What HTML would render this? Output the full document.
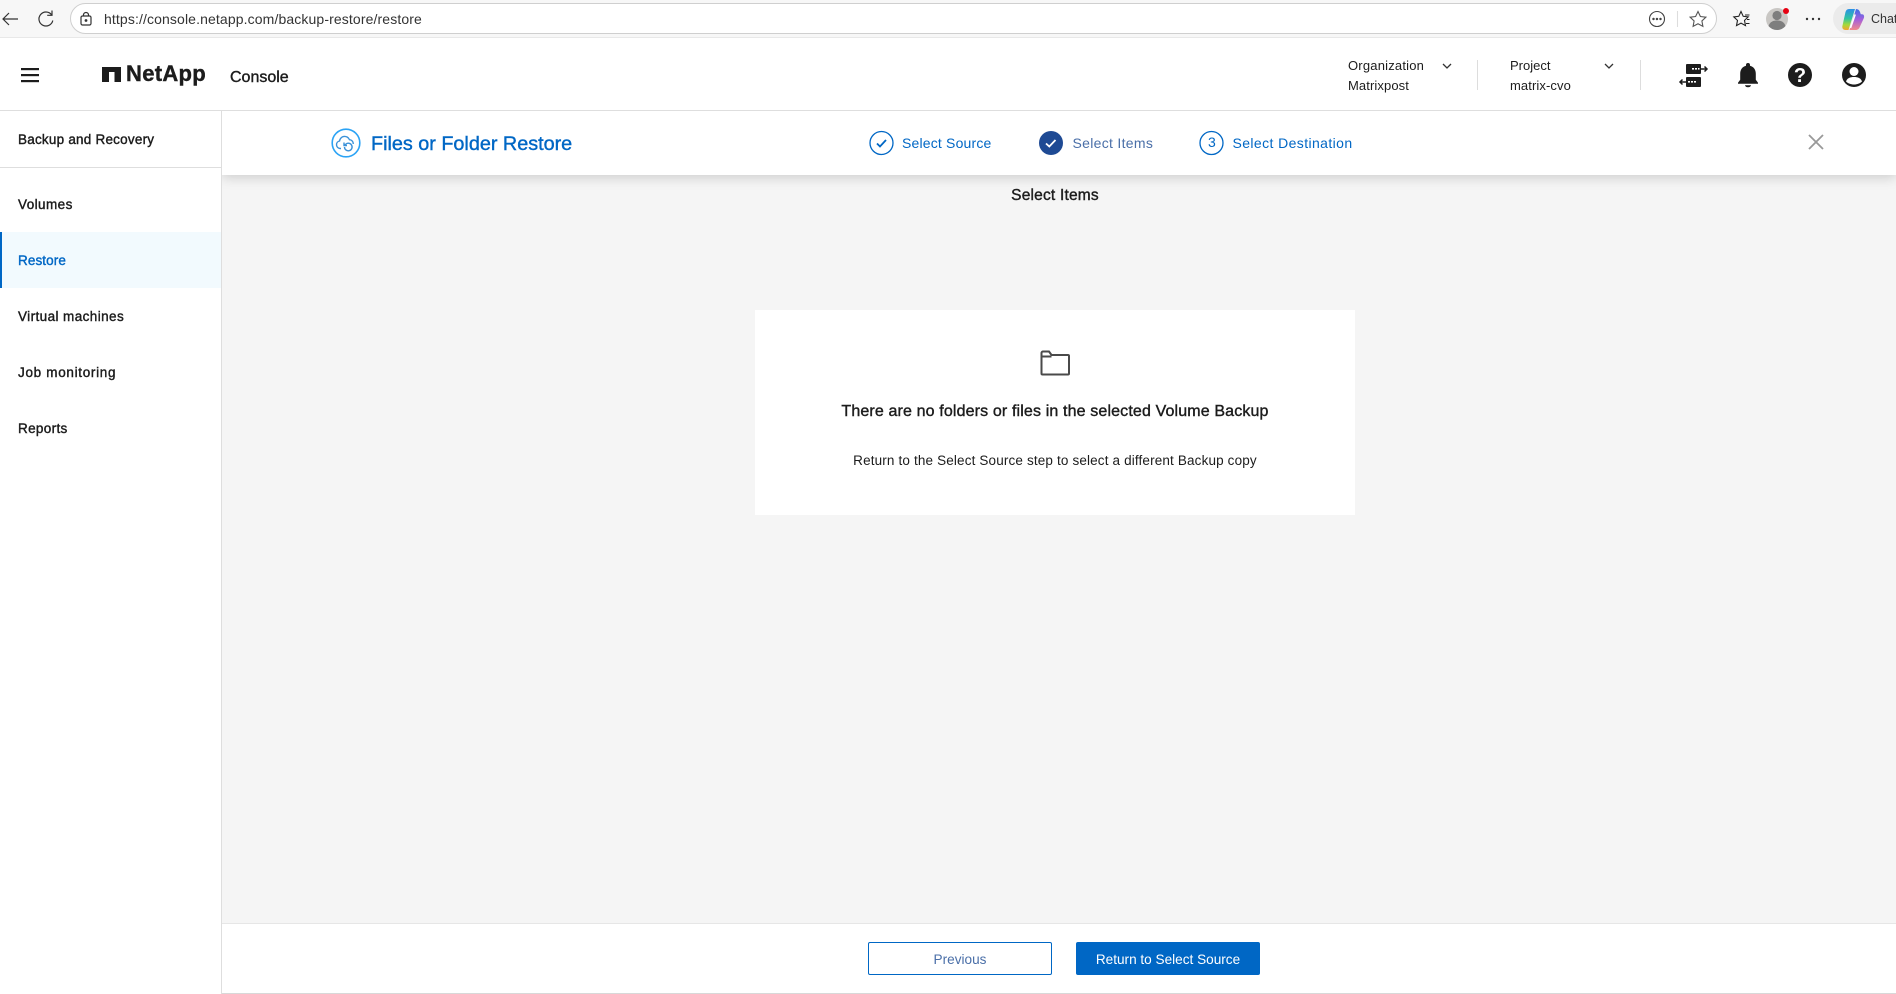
<!DOCTYPE html>
<html lang="en"><head><meta charset="utf-8"><title>NetApp Console</title>
<style>
html,body{margin:0;padding:0;width:1896px;height:994px;overflow:hidden;background:#fff}
body{position:relative;font-family:"Liberation Sans",sans-serif;color:#1c1c1c}
.a{position:absolute}
.t{position:absolute;white-space:nowrap;line-height:20px;height:20px}
.s{-webkit-text-stroke:.4px currentColor}
svg{position:absolute;overflow:visible}
</style></head><body>
<!-- browser chrome -->
<div class="a" style="left:0;top:0;width:1896px;height:38px;background:#f7f7f7;border-bottom:1px solid #e8e8e8;box-sizing:border-box"></div>
<div class="a" style="left:70px;top:3px;width:1647px;height:31px;box-sizing:border-box;background:#fff;border:1px solid #cfcfcf;border-radius:16px"></div>
<svg style="left:0;top:0" width="100" height="38" fill="none" stroke="#333" stroke-width="1.200"><path d="M18 19H3M9 13l-6 6 6 6"/><path d="M51.500 14.700A7 7 0 1 0 52.800 20.500M52 10.500v4.800h-4.800"/><rect x="81" y="16" width="10" height="9" rx="1.500"/><path d="M83.500 16v-1a2.500 2.500 0 0 1 5 0v1"/><circle cx="86" cy="20.500" r=".8" fill="#333"/></svg>
<div class="t" style="left:104px;top:9px;font-size:14px;letter-spacing:.12px;color:#333">https://console.netapp.com/backup-restore/restore</div>
<svg style="left:1640px;top:0" width="256" height="38" fill="none" stroke="#444" stroke-width="1.100">
<defs>
<linearGradient id="g1" x1="0" y1="0" x2="0" y2="1"><stop offset="0" stop-color="#2a8fe8"/><stop offset=".45" stop-color="#2fc4a0"/><stop offset=".75" stop-color="#a6d93a"/><stop offset="1" stop-color="#f6a32e"/></linearGradient>
<linearGradient id="g2" x1="0" y1="0" x2="0" y2="1"><stop offset="0" stop-color="#3a6fe6"/><stop offset=".5" stop-color="#a45fdc"/><stop offset="1" stop-color="#f28a8a"/></linearGradient>
</defs>
<circle cx="17" cy="19" r="7.500"/><circle cx="13.500" cy="19" r=".7" fill="#444"/><circle cx="17" cy="19" r=".7" fill="#444"/><circle cx="20.500" cy="19" r=".7" fill="#444"/>
<path d="M37.500 11v16" stroke="#ddd"/>
<path d="M58 11.500l2.400 5 5.500.7-4 3.800 1 5.400-4.900-2.600-4.900 2.600 1-5.400-4-3.800 5.500-.7z" stroke="#555"/>
<path d="M101 11.500l2.200 4.800 5 .6-3.700 3.500 1 5.200-4.500-2.500-4.500 2.500 1-5.200-3.700-3.500 5-.6z" stroke="#222"/><path d="M105 15h4.500M107 19.500h2.500M106 23.500h3.500" stroke="#222"/>
<circle cx="137" cy="19" r="11" fill="#c9c7c4" stroke="none"/><circle cx="137" cy="15.500" r="4.600" fill="#7e7e7e" stroke="none"/><path d="M128.500 26c1.500-4.500 5-5.500 8.500-5.500s7 1 8.500 5.500a11 11 0 0 1-17 0z" fill="#7e7e7e" stroke="none"/>
<circle cx="146" cy="11" r="3" fill="#e60012" stroke="none"/>
<circle cx="167" cy="19" r="1.200" fill="#333" stroke="none"/><circle cx="173" cy="19" r="1.200" fill="#333" stroke="none"/><circle cx="179" cy="19" r="1.200" fill="#333" stroke="none"/>
<rect x="193" y="3" width="80" height="31" rx="15.500" fill="#ebebeb" stroke="none"/>
<path d="M209 9h6l-6.500 21h-3c-2.500 0-3.700-2-3-4.500L205.500 12c.6-2 1.700-3 3.500-3z" fill="url(#g1)" stroke="none"/>
<path d="M216 9c2 0 3.300 1 4 3l.8 2.300H222c1.800 0 2.500 1.700 1.900 3.700L220 26.500c-.8 2.300-2.200 3.500-4.500 3.500h-6z" fill="url(#g2)" stroke="none"/>
<path d="M215.200 14.500L210.500 28" stroke="#fff" stroke-width="1.500"/>
</svg>
<div class="t" style="left:1871px;top:9px;font-size:12.500px;color:#333">Chat</div>

<!-- app header -->
<div class="a" style="left:0;top:38px;width:1896px;height:73px;background:#fff;border-bottom:1px solid #dedede;box-sizing:border-box"></div>
<svg style="left:21px;top:67px" width="18" height="16" fill="#1c1c1c"><rect y="1" width="18" height="2.200"/><rect y="7" width="18" height="2.200"/><rect y="13" width="18" height="2.200"/></svg>
<svg style="left:102px;top:67px" width="19" height="15"><path d="M0 0h19v15h-6.500V5h-5.500V15H0z" fill="#1c1c1c"/></svg>
<div class="t s" style="left:126px;top:64px;font-size:22px;font-weight:bold;letter-spacing:.3px">NetApp</div>
<div class="t s" style="left:230px;top:68px;font-size:16px">Console</div>
<div class="t" style="left:1348px;top:56px;font-size:13px;letter-spacing:.2px">Organization</div>
<div class="t" style="left:1348px;top:76px;font-size:13px;letter-spacing:.1px">Matrixpost</div>
<div class="t" style="left:1510px;top:56px;font-size:13px">Project</div>
<div class="t" style="left:1510px;top:76px;font-size:13px;letter-spacing:.1px">matrix-cvo</div>
<svg style="left:1441px;top:62px" width="180" height="10" fill="none" stroke="#333" stroke-width="1.300"><path d="M2 2l4 4 4-4"/><path d="M164 2l4 4 4-4"/></svg>
<div class="a" style="left:1477px;top:60px;width:1px;height:30px;background:#ddd"></div>
<div class="a" style="left:1640px;top:60px;width:1px;height:30px;background:#ddd"></div>
<svg style="left:1680px;top:60px" width="200" height="30" fill="#1c1c1c">
<rect x="6" y="4" width="15" height="10" rx="1"/><rect x="6" y="17" width="15" height="10" rx="1"/>
<path d="M21 9h6M24.500 6.500L27 9l-2.500 2.500M6 22H0M2.500 19.500L0 22l2.500 2.500" stroke="#1c1c1c" stroke-width="1.500" fill="none"/>
<g fill="#fff"><rect x="12" y="8" width="2" height="1.600"/><rect x="15" y="8" width="2" height="1.600"/><rect x="18" y="8" width="1.500" height="1.600"/><rect x="8" y="21" width="2" height="1.600"/><rect x="11" y="21" width="2" height="1.600"/><rect x="14" y="21" width="2" height="1.600"/></g>
<path d="M68 3a2 2 0 0 1 2 2v.8c3.800 1 5.800 4 5.800 8v6l2.200 3v1H58v-1l2.200-3v-6c0-4 2-7 5.800-8V5a2 2 0 0 1 2-2z"/><path d="M65 25.200h6a3 2 0 0 1-6 0z"/>
<circle cx="120" cy="15" r="12"/>
<text x="120" y="22" font-family="Liberation Sans,sans-serif" font-size="20" font-weight="bold" text-anchor="middle" fill="#fff">?</text>
<circle cx="174" cy="15" r="12"/><circle cx="174" cy="11.500" r="4.500" fill="#fff"/><path d="M166 21.500c1-3.300 4.200-4.500 8-4.500s7 1.200 8 4.500c-1.800 1.800-4.800 3-8 3s-6.200-1.200-8-3z" fill="#fff"/>
</svg>

<!-- sidebar -->
<div class="a" style="left:0;top:111px;width:222px;height:883px;background:#fff;border-right:1px solid #dedede;box-sizing:border-box"></div>
<div class="a" style="left:0;top:167px;width:221px;height:1px;background:#dedede"></div>
<div class="a" style="left:0;top:232px;width:221px;height:56px;background:#f2fafe"></div>
<div class="a" style="left:0;top:232px;width:2px;height:56px;background:#0067c5"></div>
<div class="t s" style="left:18px;top:130px;font-size:13.500px;letter-spacing:.22px">Backup and Recovery</div>
<div class="t s" style="left:18px;top:195px;font-size:13.500px;letter-spacing:.43px">Volumes</div>
<div class="t s" style="left:18px;top:251px;font-size:13.500px;letter-spacing:.1px;color:#0067c5">Restore</div>
<div class="t s" style="left:18px;top:307px;font-size:13.500px;letter-spacing:.41px">Virtual machines</div>
<div class="t s" style="left:18px;top:363px;font-size:13.500px;letter-spacing:.69px">Job monitoring</div>
<div class="t s" style="left:18px;top:419px;font-size:13.500px;letter-spacing:.34px">Reports</div>

<!-- main -->
<div class="a" style="left:222px;top:111px;width:1674px;height:812px;background:#f5f5f5"></div>
<div class="a" style="left:222px;top:111px;width:1674px;height:64px;background:#fff;box-shadow:0 2px 12px rgba(0,0,0,.18);clip-path:inset(0 0 -24px 0)"></div>
<svg style="left:331px;top:128px" width="30" height="30" fill="none" stroke="#2ba3f5" stroke-width="1.600"><circle cx="15" cy="15" r="13.800"/><path d="M10 20.500H9a3.800 3.800 0 0 1-.5-7.500 5.200 5.200 0 0 1 10-1.300 4 4 0 0 1 3.800 4.300" stroke="#3a91d8" stroke-width="1.400"/><path d="M13.500 19a3.800 3.800 0 1 0 1.500-3l-1.500 1.300M13 14.500v3h3" stroke="#3a91d8" stroke-width="1.400"/></svg>
<div class="t s" style="left:371px;top:134px;font-size:19.800px;color:#0067c5">Files or Folder Restore</div>
<svg style="left:869px;top:130px" width="360" height="26" fill="none" stroke="#0067c5" stroke-width="1.300">
<circle cx="12.500" cy="13" r="11.500"/><path d="M8 13.500l3 3 6-6.500" stroke-width="1.800"/>
<circle cx="182" cy="13" r="12" fill="#1e4a94" stroke="none"/><path d="M177 13.500l3.300 3 6.200-6.500" stroke="#fff" stroke-width="1.800"/>
<circle cx="342.500" cy="13" r="11.500"/>
</svg>
<div class="t" style="left:1212px;top:132px;font-size:14px;color:#0067c5;width:0;text-indent:-4px">3</div>
<div class="t" style="left:902px;top:133px;font-size:14px;letter-spacing:.18px;color:#0067c5">Select Source</div>
<div class="t" style="left:1072.500px;top:133px;font-size:14px;letter-spacing:.3px;color:#4a6fa8">Select Items</div>
<div class="t" style="left:1232.500px;top:133px;font-size:14px;letter-spacing:.4px;color:#0067c5">Select Destination</div>
<svg style="left:1808px;top:134px" width="16" height="16" fill="none" stroke="#999" stroke-width="1.800"><path d="M1 1l14 14M15 1L1 15"/></svg>
<div class="t s" style="left:955px;top:186px;width:200px;text-align:center;font-size:15.500px;letter-spacing:.2px">Select Items</div>

<!-- card -->
<div class="a" style="left:755px;top:310px;width:600px;height:205px;background:#fff"></div>
<svg style="left:1040px;top:350px" width="30" height="26" fill="none" stroke="#4a4a4a" stroke-width="2"><path d="M1.500 5V3a1.500 1.500 0 0 1 1.500-1.500h6L11.500 5H28a1 1 0 0 1 1 1v17.500a1 1 0 0 1-1 1H2.500a1 1 0 0 1-1-1z"/><path d="M1.500 6.500h10"/></svg>
<div class="t s" style="left:755px;top:402px;width:600px;text-align:center;font-size:16px;letter-spacing:.14px">There are no folders or files in the selected Volume Backup</div>
<div class="t" style="left:755px;top:451px;width:600px;text-align:center;font-size:13.500px;letter-spacing:.15px">Return to the Select Source step to select a different Backup copy</div>

<!-- footer -->
<div class="a" style="left:222px;top:923px;width:1674px;height:71px;background:#fff;border-top:1px solid #e6e6e6;border-bottom:1px solid #d8d8d8;box-sizing:border-box"></div>
<div class="a" style="left:868px;top:942px;width:184px;height:33px;box-sizing:border-box;background:#fff;border:1px solid #0067c5;border-radius:2px"></div>
<div class="t" style="left:868px;top:950px;width:184px;text-align:center;font-size:13.600px;color:#4a6fa8">Previous</div>
<div class="a" style="left:1076px;top:942px;width:184px;height:33px;background:#0067c5;border-radius:2px"></div>
<div class="t" style="left:1076px;top:950px;width:184px;text-align:center;font-size:13.600px;color:#fff">Return to Select Source</div>
</body></html>
